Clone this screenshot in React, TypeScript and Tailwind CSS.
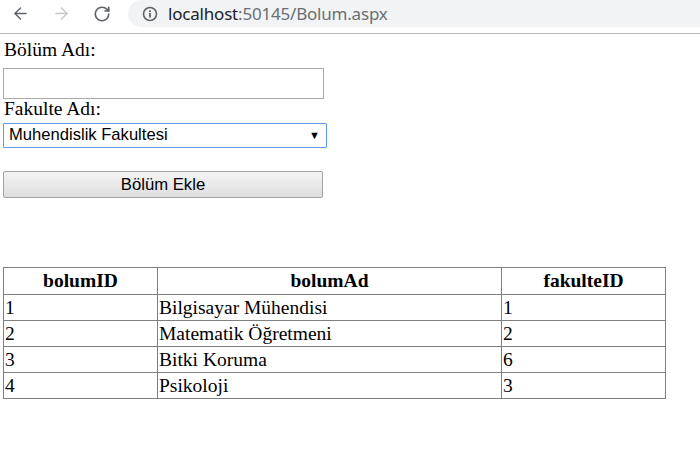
import { ArrowLeft, ArrowRight, RotateCw } from 'lucide-react';

const rows = [
  { id: '1', ad: 'Bilgisayar Mühendisi', fak: '1' },
  { id: '2', ad: 'Matematik Öğretmeni', fak: '2' },
  { id: '3', ad: 'Bitki Koruma', fak: '6' },
  { id: '4', ad: 'Psikoloji', fak: '3' },
];

export default function App() {
  return (
    <div className="w-[700px] h-[454px] bg-white overflow-hidden">
      {/* Browser toolbar */}
      <div className="h-[34px] flex items-start border-b border-[#b8b8b8]">
        <div className="flex items-center h-[27px] pl-[11px] gap-[22px] text-[#5f6368]">
          <ArrowLeft className="w-[19px] h-[19px]" strokeWidth={1.8} />
          <ArrowRight className="w-[19px] h-[19px] text-[#c4c6c9]" strokeWidth={1.8} />
          <RotateCw className="w-[18px] h-[18px]" strokeWidth={2.2} />
        </div>
        <div className="ml-[17px] flex-1 h-[27px] bg-[#f1f3f4] rounded-l-[14px] flex items-center pl-[14px]">
          <svg width="16" height="16" viewBox="0 0 16 16" className="text-[#5f6368]">
            <circle cx="8" cy="8" r="6.5" fill="none" stroke="currentColor" strokeWidth="1.6" />
            <rect x="7.1" y="7" width="1.8" height="4.5" fill="currentColor" />
            <rect x="7.1" y="4.3" width="1.8" height="1.8" fill="currentColor" />
          </svg>
          <span className="ml-[10px] text-[17px] font-['Noto_Sans',sans-serif] tracking-[-0.2px]">
            <span className="text-[#202124]">localhost</span>
            <span className="text-[#6b6f73]">:50145/Bolum.aspx</span>
          </span>
        </div>
      </div>

      {/* Form */}
      <div className="pl-[3px] pt-[4px] font-['Liberation_Serif',serif] text-[19.5px] text-black">
        <div className="leading-[23px] pl-[1px]">Bölüm Adı:</div>
        <input
          type="text"
          className="mt-[7px] block w-[321px] h-[31px] border border-[#a9a9a9] bg-white outline-none"
        />
        <div className="leading-[22px] pl-[1px] mt-[-1px]">Fakulte Adı:</div>
        <div className="mt-[3px] w-[324px] h-[25px] border border-[#5b9af2] rounded-[1px] flex items-center justify-between px-[5px] font-['Liberation_Sans',sans-serif] text-[16.6px]">
          <span>Muhendislik Fakultesi</span>
          <span className="text-[11px] mr-[1px]">▼</span>
        </div>
        <button className="mt-[23px] block w-[320px] h-[27px] border border-[#a3a3a3] rounded-[2px] bg-gradient-to-b from-[#f4f4f4] to-[#dedede] font-['Liberation_Sans',sans-serif] text-[16.7px] text-black">
          Bölüm Ekle
        </button>

        {/* Grid */}
        <table className="mt-[69px] border-collapse w-[663px] border border-[#808080] leading-[24px]">
          <thead>
            <tr className="h-[27px]">
              <th className="w-[154px] border border-[#808080] font-bold p-0">bolumID</th>
              <th className="w-[344px] border border-[#808080] font-bold p-0">bolumAd</th>
              <th className="border border-[#808080] font-bold p-0">fakulteID</th>
            </tr>
          </thead>
          <tbody>
            {rows.map((r) => (
              <tr key={r.id} className="h-[26px]">
                <td className="border border-[#808080] px-[1px] py-0">{r.id}</td>
                <td className="border border-[#808080] px-[1px] py-0">{r.ad}</td>
                <td className="border border-[#808080] px-[1px] py-0">{r.fak}</td>
              </tr>
            ))}
          </tbody>
        </table>
      </div>
    </div>
  );
}
